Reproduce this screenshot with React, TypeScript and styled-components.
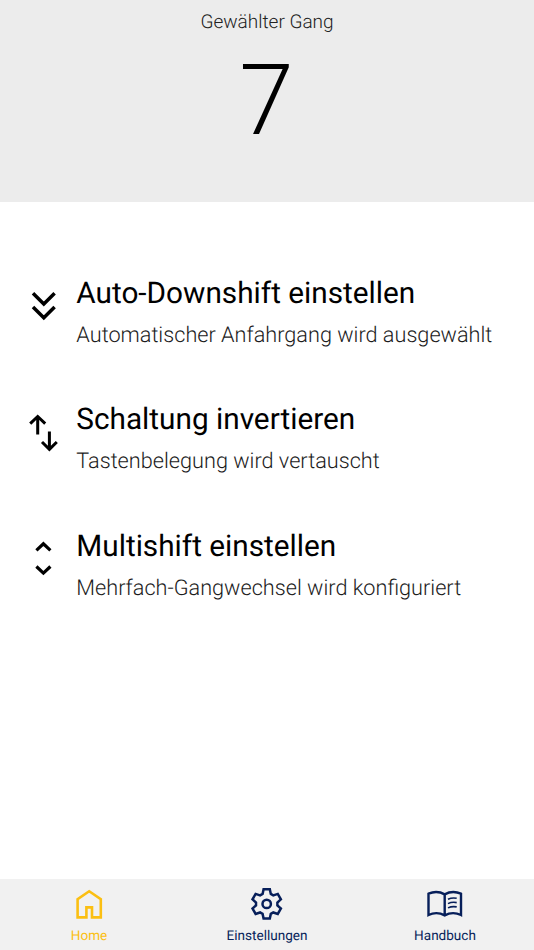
import React from 'react';
import styled, { createGlobalStyle } from 'styled-components';

const Global = createGlobalStyle`
  * { box-sizing: border-box; }
  body { margin: 0; background: #fff; font-family: Roboto, sans-serif; color: #000; }
`;
const Screen = styled.div`display: flex; flex-direction: column; height: 950px; width: 534px;`;
const Header = styled.header`
  height: 201.5px; background: #ececec; display: flex; flex-direction: column; align-items: center; padding-top: 10px;
`;
const Caption = styled.div`
  font-size: 19px; line-height: 24px; font-weight: 300; white-space: nowrap; color: #222; text-rendering: geometricPrecision;
`;
const Gear = styled.div`font-size: 98px; line-height: 116px; font-weight: 300; margin-top: 9px; margin-right: 1px;`;
const List = styled.main`flex: 1; padding: 72.5px 0 0 24px;`;
const Row = styled.div`display: flex; height: 126.4px;`;
const Symbol = styled.svg`
  width: 40px; height: 50px; flex: none; margin: 6.4px 12.3px 0 0; display: block;
  fill: none; stroke: #000;
`;
const Title = styled.div`
  font-size: 29.75px; line-height: 40px; white-space: nowrap; text-rendering: geometricPrecision;
`;
const Sub = styled.div`
  font-size: 21.68px; line-height: 28px; font-weight: 300; margin-top: 8px; white-space: nowrap; color: #1c1c1c;
  text-rendering: geometricPrecision;
`;
const Nav = styled.nav`height: 71px; background: #f1f1f1; display: grid; grid-template-columns: repeat(3, 1fr);`;
const Tab = styled.div<{ $active?: boolean }>`
  color: ${p => (p.$active ? '#fbbf12' : '#071f5a')};
  display: flex; flex-direction: column; align-items: center; padding-top: 5px;
`;
const TabIcon = styled.svg`width: 40px; height: 40px; display: block; fill: none; stroke: currentColor;`;
const TabLabel = styled.span`
  font-size: 13.55px; line-height: 18px; margin-top: 3px; text-rendering: geometricPrecision;
`;

function gearPath(cx: number, cy: number) {
  const pts: string[] = [];
  for (let i = 0; i < 6; i++) {
    const a = (i * 60 - 90) * Math.PI / 180;
    [[-0.39, 10.8], [-0.21, 14.9], [0.21, 14.9], [0.39, 10.8]].forEach(([d, r]) => {
      pts.push(`${(cx + r * Math.cos(a + d)).toFixed(2)} ${(cy + r * Math.sin(a + d)).toFixed(2)}`);
    });
  }
  return `M${pts.join('L')}Z`;
}

const items = [
  {
    title: 'Auto-Downshift einstellen', sub: 'Automatischer Anfahrgang wird ausgewählt', width: 3.5,
    path: 'M9 13.2L19.8 24L30.6 13.2M9 27L19.8 37.8L30.6 27',
  },
  {
    title: 'Schaltung invertieren', sub: 'Tastenbelegung wird vertauscht', width: 3,
    path: 'M6.2 16.6L13.7 9.5L21.2 16.6M13.7 10.2V27.6M18 35L25.4 42.3L32.8 35M25.4 41.3V24.6',
  },
  {
    title: 'Multishift einstellen', sub: 'Mehrfach-Gangwechsel wird konfiguriert', width: 3.2,
    path: 'M12.4 17.3L19.4 10.8L26.4 17.3M12.4 33.5L19.4 40.1L26.4 33.5',
  },
];

export default function App() {
  return (
    <Screen>
      <Global />
      <Header><Caption>Gewählter Gang</Caption><Gear>7</Gear></Header>
      <List>
        {items.map(item => (
          <Row key={item.title}>
            <Symbol viewBox="0 0 40 50" strokeWidth={item.width}><path d={item.path} /></Symbol>
            <div><Title>{item.title}</Title><Sub>{item.sub}</Sub></div>
          </Row>
        ))}
      </List>
      <Nav>
        <Tab $active>
          <TabIcon viewBox="0 0 40 40" strokeWidth="2.6">
            <path d="M8.6 33.4V15.2L20.2 7.3L31.8 15.2V33.4H23V23.4H17.4V33.4Z" />
          </TabIcon>
          <TabLabel>Home</TabLabel>
        </Tab>
        <Tab>
          <TabIcon viewBox="0 0 40 40" strokeWidth="2.5">
            <path d={gearPath(19.7, 19.9)} /><circle cx="19.7" cy="19.9" r="4.2" />
          </TabIcon>
          <TabLabel>Einstellungen</TabLabel>
        </Tab>
        <Tab>
          <TabIcon viewBox="0 0 40 40" strokeWidth="2.4">
            <path d="M19.7 10.4C15 7.8 8.5 7.6 3.5 9.7V31C8.5 28.6 15 28.8 19.7 31.4C24.4 28.8 31 28.6 36 31V9.7C31 7.6 24.4 7.8 19.7 10.4ZV31.4" />
            <path strokeWidth="1.6" d="M23 15.3Q27 13.4 31.7 14.3M23 19.6Q27 17.7 31.7 18.6M23 23.9Q27 22 31.7 22.9" />
          </TabIcon>
          <TabLabel>Handbuch</TabLabel>
        </Tab>
      </Nav>
    </Screen>
  );
}
